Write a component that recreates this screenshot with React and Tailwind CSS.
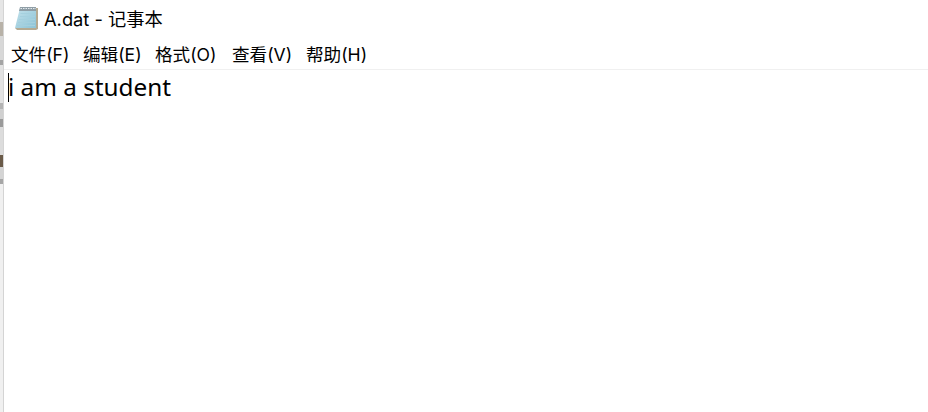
import React from "react";

const menus = [
  ["文件(F)", "w-[72px]"],
  ["编辑(E)", "w-[72px]"],
  ["格式(O)", "w-[77px]"],
  ["查看(V)", "w-[74px]"],
  ["帮助(H)", "w-[70px]"],
];

// notepad icon
function NotepadIcon() {
  return (
    <svg width="26" height="26" viewBox="0 0 26 26" className="mb-[4px] shrink-0">
      <defs>
        <linearGradient id="sheet" x1="0" y1="0" x2="1" y2="1">
          <stop offset="0" stopColor="#c4e2ec" />
          <stop offset="1" stopColor="#8cc3d6" />
        </linearGradient>
      </defs>
      <path d="M22 3 H25 V24 L23 25 H4 L2 23 H22 Z" fill="#b5aa92" />
      <path d="M7 3 H23 V23 H2 Z" fill="url(#sheet)" />
      <path d="M7.5 8.5 H22 M7 11.5 H22 M6 14.5 H22 M5 17.5 H22 M4 20.5 H22" stroke="#a5d0de" strokeWidth="1" />
      <path d="M7 2 H23 V6 H6 Z" fill="#8f9ea6" />
      <path d="M7.5 3.5 H23" stroke="#e3eaee" strokeWidth="1.2" strokeDasharray="1.5 1" />
    </svg>
  );
}

export default function App() {
  return (
    <div className="flex h-[412px] w-[928px] overflow-hidden bg-white font-['Inter','Noto_Sans_CJK_SC',sans-serif] text-black">
      {/* sliver of the window behind */}
      <div className="flex w-[4px] shrink-0 flex-col border-r border-[#d4d4d4] bg-[#eeeeee]">
        <div className="h-[22px] bg-[#e6e6e6]" />
        <div className="h-[14px] bg-[#b8b2a8]" />
        <div className="h-[24px] bg-[#d8d8d8]" />
        <div className="h-[5px] bg-[#a4a4a4]" />
        <div className="h-[38px] bg-[#e2e2e2]" />
        <div className="h-[6px] bg-[#b4b4b4]" />
        <div className="h-[10px] bg-[#d0d0d0]" />
        <div className="h-[8px] bg-[#9a9a9a]" />
        <div className="h-[28px] bg-[#dcdcdc]" />
        <div className="h-[12px] bg-[#6a5a48]" />
        <div className="h-[12px] bg-[#d4d4d4]" />
        <div className="h-[5px] bg-[#a6a6a6]" />
        <div className="flex-1 bg-[#f0f0f0]" />
      </div>

      <div className="flex min-w-0 flex-1 flex-col">
        <div className="flex h-[39px] items-center gap-[5px] pl-[9px] text-[18.3px]">
          <NotepadIcon />
          <span>A.dat - 记事本</span>
        </div>
        <div className="flex h-[31px] items-center border-b border-[#f0f0f0] pl-[7px] pt-[3px] text-[17.6px]">
          {menus.map(([label, w]) => (
            <span key={label} className={w}>{label}</span>
          ))}
        </div>
        <div className="relative flex-1 pl-[4px] pt-[1px]">
          <div className="absolute left-[4px] top-[3px] h-[29px] w-px bg-black" />
          <p className="font-['Noto_Sans',sans-serif] text-[24.3px] leading-[32px]">i am a student</p>
        </div>
      </div>
    </div>
  );
}
